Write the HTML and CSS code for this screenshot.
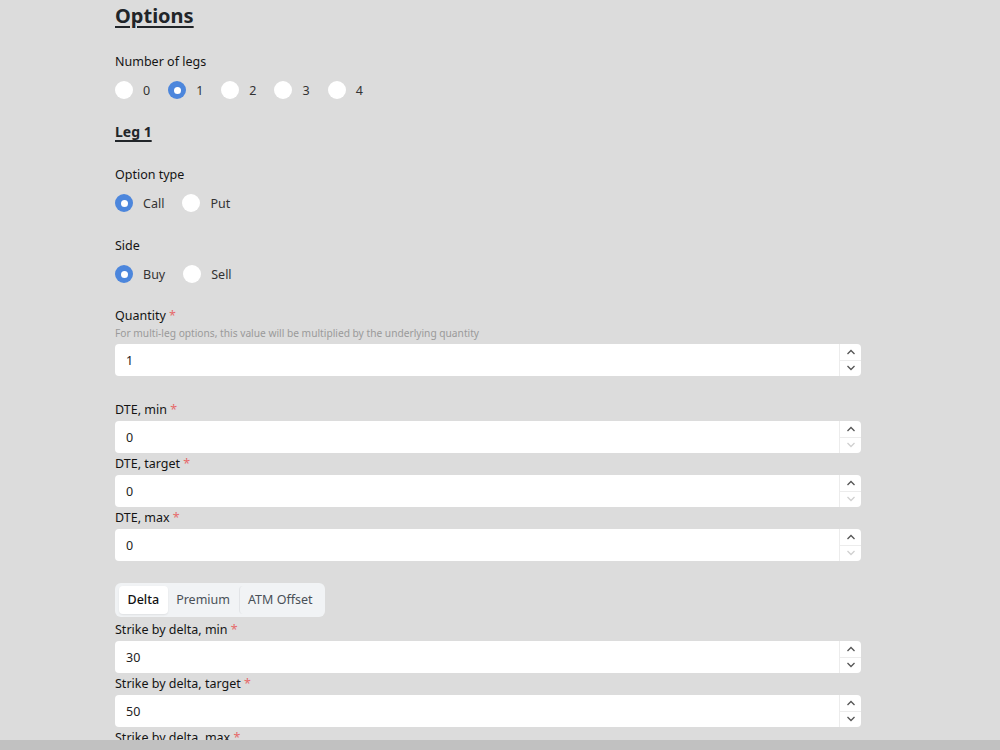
FILE: index.html
```html
<!DOCTYPE html>
<html>
<head>
<meta charset="utf-8">
<link rel="stylesheet" href="styles.css">
</head>
<body>
<main class="page">
  <h1 class="title">Options</h1>

  <section class="group first">
    <div class="label">Number of legs</div>
    <div class="radios">
      <label class="radio"><span class="dot"></span><span>0</span></label>
      <label class="radio"><span class="dot on"></span><span>1</span></label>
      <label class="radio"><span class="dot"></span><span>2</span></label>
      <label class="radio"><span class="dot"></span><span>3</span></label>
      <label class="radio"><span class="dot"></span><span>4</span></label>
    </div>
  </section>

  <h2 class="subtitle">Leg 1</h2>

  <section class="group loose">
    <div class="label">Option type</div>
    <div class="radios">
      <label class="radio"><span class="dot on"></span><span>Call</span></label>
      <label class="radio"><span class="dot"></span><span>Put</span></label>
    </div>
  </section>

  <section class="group loose">
    <div class="label">Side</div>
    <div class="radios">
      <label class="radio"><span class="dot on"></span><span>Buy</span></label>
      <label class="radio"><span class="dot"></span><span>Sell</span></label>
    </div>
  </section>

  <section class="group">
    <div class="label">Quantity <span class="req">*</span></div>
    <div class="desc">For multi-leg options, this value will be multiplied by the underlying quantity</div>
    <div class="input">
      <span class="value">1</span>
      <div class="spin">
        <span class="btn"><svg viewBox="0 0 10 6" width="10" height="6"><polyline points="1.5,5 5,1.5 8.5,5"/></svg></span>
        <span class="btn"><svg viewBox="0 0 10 6" width="10" height="6"><polyline points="1.5,1 5,4.5 8.5,1"/></svg></span>
      </div>
    </div>
  </section>

  <section class="group stack wide">
    <div class="field">
      <div class="label">DTE, min <span class="req">*</span></div>
      <div class="input">
        <span class="value">0</span>
        <div class="spin">
          <span class="btn"><svg viewBox="0 0 10 6" width="10" height="6"><polyline points="1.5,5 5,1.5 8.5,5"/></svg></span>
          <span class="btn off"><svg viewBox="0 0 10 6" width="10" height="6"><polyline points="1.5,1 5,4.5 8.5,1"/></svg></span>
        </div>
      </div>
    </div>
    <div class="field">
      <div class="label">DTE, target <span class="req">*</span></div>
      <div class="input">
        <span class="value">0</span>
        <div class="spin">
          <span class="btn"><svg viewBox="0 0 10 6" width="10" height="6"><polyline points="1.5,5 5,1.5 8.5,5"/></svg></span>
          <span class="btn off"><svg viewBox="0 0 10 6" width="10" height="6"><polyline points="1.5,1 5,4.5 8.5,1"/></svg></span>
        </div>
      </div>
    </div>
    <div class="field">
      <div class="label">DTE, max <span class="req">*</span></div>
      <div class="input">
        <span class="value">0</span>
        <div class="spin">
          <span class="btn"><svg viewBox="0 0 10 6" width="10" height="6"><polyline points="1.5,5 5,1.5 8.5,5"/></svg></span>
          <span class="btn off"><svg viewBox="0 0 10 6" width="10" height="6"><polyline points="1.5,1 5,4.5 8.5,1"/></svg></span>
        </div>
      </div>
    </div>
  </section>

  <section class="group stack wider">
    <div class="tabs">
      <span class="tab active">Delta</span>
      <span class="tab">Premium</span>
      <span class="tab sep">ATM Offset</span>
    </div>
    <div class="field">
      <div class="label">Strike by delta, min <span class="req">*</span></div>
      <div class="input">
        <span class="value">30</span>
        <div class="spin">
          <span class="btn"><svg viewBox="0 0 10 6" width="10" height="6"><polyline points="1.5,5 5,1.5 8.5,5"/></svg></span>
          <span class="btn"><svg viewBox="0 0 10 6" width="10" height="6"><polyline points="1.5,1 5,4.5 8.5,1"/></svg></span>
        </div>
      </div>
    </div>
    <div class="field">
      <div class="label">Strike by delta, target <span class="req">*</span></div>
      <div class="input">
        <span class="value">50</span>
        <div class="spin">
          <span class="btn"><svg viewBox="0 0 10 6" width="10" height="6"><polyline points="1.5,5 5,1.5 8.5,5"/></svg></span>
          <span class="btn"><svg viewBox="0 0 10 6" width="10" height="6"><polyline points="1.5,1 5,4.5 8.5,1"/></svg></span>
        </div>
      </div>
    </div>
    <div class="field">
      <div class="label">Strike by delta, max <span class="req">*</span></div>
      <div class="input">
        <span class="value">70</span>
        <div class="spin">
          <span class="btn"><svg viewBox="0 0 10 6" width="10" height="6"><polyline points="1.5,5 5,1.5 8.5,5"/></svg></span>
          <span class="btn"><svg viewBox="0 0 10 6" width="10" height="6"><polyline points="1.5,1 5,4.5 8.5,1"/></svg></span>
        </div>
      </div>
    </div>
  </section>
</main>
<div class="hscroll"></div>
</body>
</html>
```

FILE: styles.css
```css
html, body {
  margin: 0;
  padding: 0;
  background: #dcdcdc;
  height: 100%;
  overflow: hidden;
}
body {
  font-family: "Noto Sans", "Open Sans", sans-serif;
  font-size: 12.5px;
  color: #212529;
}
.page {
  width: 746px;
  margin-left: 115px;
  padding-top: 2px;
  display: flex;
  flex-direction: column;
  gap: 20px;
}
.group.first, .group.loose { margin-top: 1px; }
.group.wide { margin-top: 3px; }
.group.wider { margin-top: 2px; }
.title {
  margin: 0;
  font-size: 20px;
  line-height: 28px;
  font-weight: 700;
  text-decoration: underline;
  text-underline-offset: 3px;
  text-decoration-thickness: 2px;
}
.subtitle {
  margin: 0;
  font-size: 14px;
  line-height: 22px;
  font-weight: 700;
  text-decoration: underline;
  text-underline-offset: 3px;
  text-decoration-thickness: 1.5px;
}
.label {
  line-height: 22px;
  font-weight: 400;
  color: #141414;
}
.req { color: #e66a6a; }
.desc {
  font-size: 10.2px;
  line-height: 14px;
  color: #9a9a9a;
  margin-bottom: 4px;
  margin-top: -1px;
}
.radios {
  margin-top: 6px;
  display: flex;
  gap: 18px;
  height: 22px;
  align-items: center;
}
.radio {
  display: flex;
  align-items: center;
  gap: 10px;
  color: #333;
}
.dot {
  width: 18px;
  height: 18px;
  border-radius: 50%;
  background: #fff;
  display: flex;
  align-items: center;
  justify-content: center;
}
.dot.on { background: #4c86dc; }
.dot.on::after {
  content: "";
  width: 7px;
  height: 7px;
  border-radius: 50%;
  background: #fff;
}
.stack {
  display: flex;
  flex-direction: column;
}
.input {
  height: 32px;
  background: #fff;
  border-radius: 4px;
  display: flex;
  align-items: center;
  box-sizing: border-box;
}
.value {
  flex: 1;
  padding-left: 11px;
  color: #222;
}
.spin {
  width: 21px;
  height: 100%;
  border-left: 1px solid #ececec;
  display: flex;
  flex-direction: column;
}
.btn {
  flex: 1;
  display: flex;
  align-items: center;
  justify-content: center;
}
.btn + .btn { border-top: 1px solid #ececec; }
.btn svg polyline {
  fill: none;
  stroke: #555;
  stroke-width: 1.3;
}
.btn.off svg polyline { stroke: #d0d0d0; }
.tabs {
  align-self: flex-start;
  display: flex;
  padding: 3px 4px;
  background: #f1f3f5;
  border-radius: 6px;
  margin-bottom: 2px;
}
.tab {
  padding: 0 8.5px;
  height: 28px;
  line-height: 28px;
  color: #495057;
  border-radius: 4px;
}
.tab.active {
  background: #fff;
  color: #111;
  font-weight: 500;
  box-shadow: 0 1px 2px rgba(0,0,0,0.08);
}
.tab.sep { border-left: 1px solid #e2e4e7; }
.hscroll {
  position: fixed;
  left: 0;
  right: 0;
  bottom: 0;
  height: 10px;
  background: #c1c1c1;
}
```
